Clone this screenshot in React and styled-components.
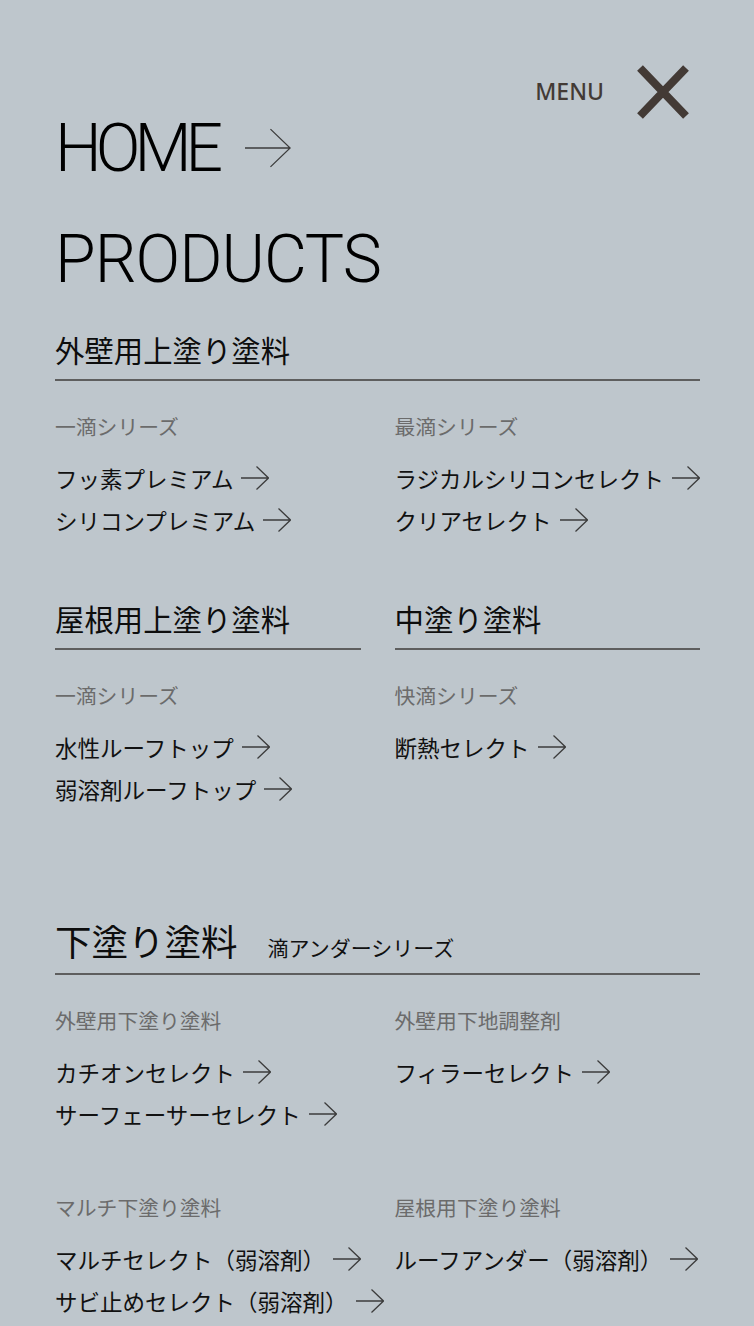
import React from "react";
import styled, { createGlobalStyle } from "styled-components";

const GlobalStyle = createGlobalStyle`
  body {
    margin: 0;
    background: #bec6cc;
  }
`;

const JP = `"Noto Sans CJK JP", "Noto Sans", sans-serif`;

const Page = styled.div`
  position: relative;
  min-height: 1326px;
  padding: 109px 54px 0 55px;
  box-sizing: border-box;
  background: #bec6cc;
  font-family: ${JP};
  color: #111;
`;

const MenuBar = styled.div`
  position: absolute;
  top: 65px;
  right: 64px;
  display: flex;
  align-items: center;
  gap: 32px;
`;

const MenuLabel = styled.span`
  font-family: "Noto Sans", "Open Sans", sans-serif;
  font-size: 23px;
  line-height: 30px;
  font-weight: 500;
  color: #433a35;
  margin-top: -3px;
`;

const BigLink = styled.div`
  display: flex;
  align-items: center;
  font-family: Roboto, "Liberation Sans", sans-serif;
  font-weight: 300;
  font-size: 66px;
  line-height: 80px;
  letter-spacing: ${(p) => p.$tracking || 0}px;
  color: #000;
  margin-bottom: ${(p) => p.$space || 0}px;
`;

const BigArrow = styled.span`
  display: flex;
  margin-left: 28px;
  margin-top: -2px;
`;

const Section = styled.section`
  margin-top: ${(p) => p.$top}px;
`;

const Columns = styled.div`
  display: grid;
  grid-template-columns: minmax(0, 1fr) minmax(0, 1fr);
  column-gap: 34px;
  row-gap: ${(p) => p.$rowGap || 0}px;
`;

const Heading = styled.h2`
  display: flex;
  align-items: baseline;
  margin: 0;
  padding-bottom: ${(p) => p.$pad ?? 7}px;
  border-bottom: 2px solid #5e5e5e;
  font-size: ${(p) => p.$size || 29.4}px;
  line-height: ${(p) => p.$lh || 45}px;
  font-weight: 400;
  color: #0d0d0d;
`;

const HeadingNote = styled.span`
  font-size: 21px;
  line-height: 30px;
  margin-left: 30px;
  color: #111;
`;

const Group = styled.div`
  padding-top: 30px;
`;

const SeriesName = styled.div`
  font-size: 20.8px;
  line-height: 30px;
  color: #6b6b6b;
  margin-bottom: 16px;
`;

const ItemList = styled.ul`
  list-style: none;
  margin: 0;
  padding: 0;
`;

const Item = styled.li`
  display: flex;
  align-items: center;
  gap: 8px;
  font-size: 22.5px;
  line-height: 42px;
  white-space: nowrap;
  color: #111;

  svg {
    flex-shrink: 0;
  }
`;

const Arrow = ({ w = 28, h = 24 }) => (
  <svg width={w} height={h} viewBox="0 0 28 24" fill="none" stroke="#3c3c3c" strokeWidth={(28 / w) * 1.3}>
    <path d="M0 12H27.5M15.5 0.5L27.5 12L15.5 23.5" />
  </svg>
);

const CloseIcon = () => (
  <svg width="54" height="54" viewBox="0 0 54 54">
    <path d="M4 3L50 51M50 3L4 51" stroke="#433a35" strokeWidth="8" />
  </svg>
);

const ProductGroup = ({ series, items }) => (
  <Group>
    <SeriesName>{series}</SeriesName>
    <ItemList>
      {items.map((t) => (
        <Item key={t}>
          {t}
          <Arrow />
        </Item>
      ))}
    </ItemList>
  </Group>
);

export default function App() {
  return (
    <>
      <GlobalStyle />
      <Page>
        <MenuBar>
          <MenuLabel>MENU</MenuLabel>
          <CloseIcon />
        </MenuBar>

        <BigLink $space={31} $tracking={-6}>
          HOME
          <BigArrow>
            <Arrow w={46} h={40} />
          </BigArrow>
        </BigLink>
        <BigLink $tracking={-1}>PRODUCTS</BigLink>

        <Section $top={27}>
          <Heading>外壁用上塗り塗料</Heading>
          <Columns>
            <ProductGroup series="一滴シリーズ" items={["フッ素プレミアム", "シリコンプレミアム"]} />
            <ProductGroup series="最滴シリーズ" items={["ラジカルシリコンセレクト", "クリアセレクト"]} />
          </Columns>
        </Section>

        <Section $top={55}>
          <Columns>
            <div>
              <Heading>屋根用上塗り塗料</Heading>
              <ProductGroup series="一滴シリーズ" items={["水性ルーフトップ", "弱溶剤ルーフトップ"]} />
            </div>
            <div>
              <Heading>中塗り塗料</Heading>
              <ProductGroup series="快滴シリーズ" items={["断熱セレクト"]} />
            </div>
          </Columns>
        </Section>

        <Section $top={103}>
          <Heading $size={36.5} $lh={55} $pad={5}>
            下塗り塗料
            <HeadingNote>滴アンダーシリーズ</HeadingNote>
          </Heading>
          <Columns $rowGap={27}>
            <ProductGroup series="外壁用下塗り塗料" items={["カチオンセレクト", "サーフェーサーセレクト"]} />
            <ProductGroup series="外壁用下地調整剤" items={["フィラーセレクト"]} />
            <ProductGroup series="マルチ下塗り塗料" items={["マルチセレクト（弱溶剤）", "サビ止めセレクト（弱溶剤）"]} />
            <ProductGroup series="屋根用下塗り塗料" items={["ルーフアンダー（弱溶剤）"]} />
          </Columns>
        </Section>
      </Page>
    </>
  );
}
